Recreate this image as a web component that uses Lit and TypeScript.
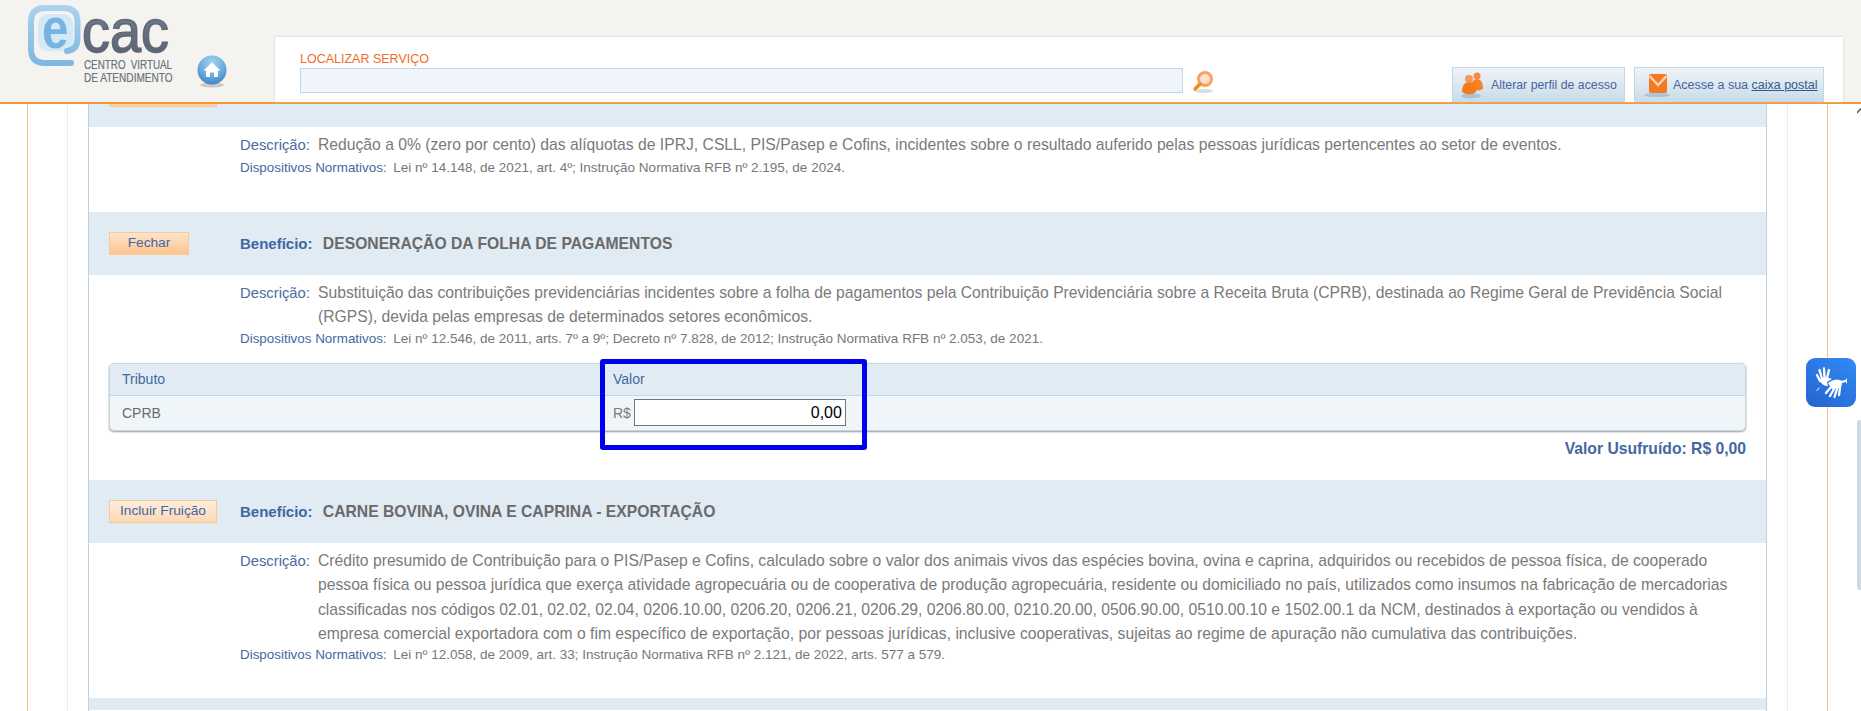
import { LitElement, html, css, svg } from "lit";
import { customElement } from "lit/decorators.js";

const logo = svg`
<svg class="logo" width="152" height="88" viewBox="24 0 152 88">
  <defs>
    <linearGradient id="lg" x1="0" y1="0" x2="0" y2="1"><stop offset="0" stop-color="#a9d2ee"/><stop offset="1" stop-color="#7db7e2"/></linearGradient>
    <linearGradient id="cg" x1="0" y1="0" x2="0" y2="1"><stop offset="0" stop-color="#7d8696"/><stop offset="1" stop-color="#535d6e"/></linearGradient>
  </defs>
  <rect x="38" y="14" width="35" height="37" rx="10" fill="#d5e8f6"/>
  <path d="M71 63 H45 Q31 63 31 49 V22 Q31 8 45 8 H64 Q77.500 8 77.500 22 V38 Q77.500 50 67 51" fill="none" stroke="url(#lg)" stroke-width="6" stroke-linecap="round"/>
  <text transform="translate(42,48) scale(.82,1)" font-family="Liberation Sans, Arial, sans-serif" font-weight="700" font-size="58" fill="#76b3e0">e</text>
  <text transform="translate(82,52) scale(.9,1)" font-family="Liberation Sans, Arial, sans-serif" font-size="62" fill="url(#cg)" stroke="#5f6979" stroke-width="1.600">cac</text>
  <text transform="translate(84,69) scale(.82,1)" word-spacing="3" font-family="Liberation Sans, Arial, sans-serif" font-size="12" fill="#6c7480" stroke="#6c7480" stroke-width=".2">CENTRO VIRTUAL</text>
  <text transform="translate(84,81.500) scale(.84,1)" font-family="Liberation Sans, Arial, sans-serif" font-size="12" fill="#6c7480" stroke="#6c7480" stroke-width=".2">DE ATENDIMENTO</text>
</svg>`;

const home = svg`
<svg class="home" width="32" height="34" viewBox="0 0 32 34">
  <defs>
    <radialGradient id="hg" cx=".5" cy=".25" r=".8"><stop offset="0" stop-color="#a4d2f0"/><stop offset=".6" stop-color="#66a8dc"/><stop offset="1" stop-color="#3c7fbc"/></radialGradient>
  </defs>
  <ellipse cx="16" cy="30" rx="12" ry="2.500" fill="#c9c9c5"/>
  <circle cx="16" cy="15" r="14.500" fill="url(#hg)"/>
  <path d="M16 7.500 L24.500 15.500 H22 V22 H18 V17.500 H14 V22 H10 V15.500 H7.500 Z" fill="#fff"/>
</svg>`;

const lens = svg`
<svg width="22" height="24" viewBox="0 0 22 24">
  <ellipse cx="12" cy="21" rx="9" ry="2" fill="#dcdcdc"/>
  <circle cx="13" cy="9" r="6.500" fill="#fde0cf" stroke="#f9a264" stroke-width="3"/>
  <path d="M8 14 L3 19" stroke="#f28a1c" stroke-width="3.500" stroke-linecap="round"/>
</svg>`;

const people = svg`
<svg width="26" height="30" viewBox="0 0 26 30">
  <ellipse cx="10" cy="26" rx="10" ry="2.500" fill="#a9c3dc"/>
  <circle cx="16" cy="6" r="3.500" fill="#f68a3a"/>
  <path d="M10 19 Q10 9 16 9 Q22 9 22 19 Q16 22 10 19Z" fill="#f5832a"/>
  <circle cx="8" cy="9" r="4" fill="#f79a58"/>
  <path d="M1 22 Q1 12 8 12 Q15 12 15 22 Q8 27 1 22Z" fill="#f47b1c"/>
</svg>`;

const mail = svg`
<svg width="28" height="28" viewBox="0 0 28 28">
  <ellipse cx="13" cy="24" rx="13" ry="2" fill="#a9c3dc"/>
  <rect x="5" y="3" width="18" height="19" rx="2" fill="#f47a22"/>
  <path d="M5.500 5 L14 14 L22.500 5" fill="none" stroke="#fbd3b4" stroke-width="2.500"/>
</svg>`;

const hands = svg`
<svg width="50" height="49" viewBox="0 0 50 49" fill="none" stroke="#fff" stroke-linecap="round">
  <g stroke-width="2.300">
    <path d="M14 23 L11 17"/><path d="M16 21 L13.500 12"/><path d="M18.500 20 L18 10.500"/><path d="M21 20 L23 12"/>
  </g>
  <path d="M13.500 22 Q16 18.500 22 19.500 L26 21 L21 24 L22 28 Q16 28 13.500 22Z" fill="#fff" stroke="none"/>
  <path d="M22 25 Q29 19 36.500 23 L35 30 L26 31Z" fill="#fff" stroke="none"/>
  <g stroke-width="2.300">
    <path d="M25 29 L20 35"/><path d="M28 31 L24 38"/><path d="M31 31 L28.500 39"/><path d="M34 30 L33 37"/><path d="M36 24 L39 23"/>
  </g>
  <path d="M40.500 21 V25 M13 30 L11 32.500" stroke-width="1"/>
</svg>`;

@customElement("app-root")
export class AppRoot extends LitElement {
  static styles = css`
    :host { display: block; position: relative; height: 711px; overflow: hidden; background: #fff;
      font-family: "Liberation Sans", Arial, sans-serif; color: #6f6f6f; }
    .top { display: flex; align-items: flex-end; height: 102px; background: #f4f3ef; border-bottom: 2px solid #f5973b; box-sizing: content-box; }
    .brand { display: flex; align-self: flex-start; width: 275px; height: 102px; padding-left: 24px; box-sizing: border-box; }
    .logo { flex: none; }
    .home { flex: none; margin: 55px 0 0 20px; }
    .panel { display: flex; width: 1568px; height: 65px; background: #fff; box-shadow: 0 0 2px #c9c9c4; box-sizing: border-box; padding-left: 25px; }
    .search { width: 883px; flex: none; padding-top: 13px; }
    .search label { display: block; height: 18px; line-height: 18px; font-size: 12.500px; color: #f26a2a; }
    .search input { display: block; width: 100%; height: 25px; box-sizing: border-box; border: 1px solid #bfd6e8; background: #eff5fa; padding: 0; }
    .lens { flex: none; margin: 33px 0 0 9px; height: 24px; }
    .actions { display: flex; gap: 9px; margin-left: 238px; align-self: flex-end; }
    .act { display: flex; align-items: center; height: 35px; box-sizing: border-box; border: 1px solid #c0d8e8; border-bottom: 0;
      background: linear-gradient(#f0f4f8, #c8dbe8); font-size: 12.500px; color: #46659f; white-space: nowrap; }
    .act.a { width: 173px; padding-left: 8px; font-size: 12.300px; }
    .act.a span { margin-left: 4px; }
    .act.b { width: 190px; padding-left: 9px; }
    .act.b span { margin-left: 1px; }
    .act u { color: #34598f; }

    .page { margin: 0 33px 0 27px; border-left: 1px solid #f8c088; border-right: 1px solid #f8c088; height: 607px; overflow: hidden; }
    .col { margin: 0 39px; border-left: 1px solid #ececec; border-right: 1px solid #ececec; padding: 0 20px; height: 100%; }
    .main { border-left: 1px solid #b8d2e8; border-right: 1px solid #b8d2e8; height: 100%; }

    .bar { background: #e0ebf4; display: flex; align-items: center; height: 63px; }
    .bar.cut { height: 23px; align-items: flex-start; }
    .bar.next { height: 12px; }
    .stub { margin-left: 20px; width: 108px; height: 3px; box-sizing: border-box; background: #fcd3a8; border: 1px solid #f9c88f; border-top: 0; }
    .slot { width: 151px; flex: none; padding-left: 20px; box-sizing: border-box; }
    .btn { display: flex; justify-content: center; align-items: center; height: 23px; box-sizing: border-box; border: 1px solid #fbc890;
      font-size: 13.700px; color: #46659f; white-space: nowrap; background: linear-gradient(#fde5cd, #fcc48e); padding-bottom: 2px; }
    .btn.wide { width: 108px; background: linear-gradient(#fdeedd, #fcd8b4); }
    .btn.short { width: 80px; }
    .title { font-size: 15.700px; font-weight: 700; color: #6a6a6a; }
    .title b { color: #3f67a3; margin-right: 6px; font-size: 15px; }

    .body { padding: 5.500px 17px 0 151px; }
    .desc { display: flex; font-size: 15.700px; line-height: 24.500px; color: #7a7a7a; }
    .desc b { font-weight: 400; color: #4a6ba3; flex: none; width: 78px; font-size: 14.800px; }
    .norm { font-size: 13.500px; line-height: 16px; color: #777; margin-top: 1px; }
    .norm b { font-weight: 400; color: #44689f; margin-right: 3px; font-size: 13.400px; }
    .s1 { height: 85px; }
    .s1 .norm { margin-top: 3px; }
    .s3 .norm { margin-top: 0; }
    .s2 { height: 205px; }
    .s3 { height: 155px; }

    .tw { position: relative; margin: 16px 0 0 20px; width: 1637px; }
    .table { border: 1px solid #c6d7e4; border-radius: 5px; overflow: hidden; box-shadow: 0 1px 2px #999; background: #f0f5f9; }
    .tr { display: grid; grid-template-columns: 491px 1fr; }
    .tr > div { padding-left: 12px; display: flex; align-items: center; }
    .th { height: 32px; box-sizing: border-box; background: #e0ebf4; border-bottom: 1px solid #c3d4e2; color: #44689f; font-size: 14px; }
    .td { height: 34px; color: #6a6a6a; font-size: 14px; }
    .rs { color: #7a7a7a; margin-right: 3px; font-size: 14px; }
    .val { width: 212px; height: 27px; box-sizing: border-box; border: 1px solid #767676; background: #fff; text-align: right; font: 16px "Liberation Sans", Arial, sans-serif; color: #000; padding: 0 3px 0 0; outline: 0; }
    .mark { position: absolute; left: 491px; top: -4px; width: 267px; height: 91px; box-sizing: border-box; border: 5px solid #0000ee; border-radius: 3px; pointer-events: none; }
    .sum { text-align: right; margin: 8px 0 0 20px; width: 1637px; line-height: 20px; font-size: 15.700px; font-weight: 700; color: #44689f; }

    .hand { position: absolute; left: 1806px; top: 358px; width: 50px; height: 49px; border-radius: 9px; background: linear-gradient(35deg, #2563cf, #318bf5); display: flex; }
    .thumb { position: absolute; left: 1857px; top: 420px; width: 4px; height: 170px; background: #cfd9e2; border-radius: 3px 0 0 3px; }
    .arrow { position: absolute; left: 1857px; top: 108px; width: 4px; height: 6px; }
  `;

  render() {
    return html`
      <div class="top">
        <div class="brand">${logo}${home}</div>
        <div class="panel">
          <div class="search"><label>LOCALIZAR SERVIÇO</label><input type="text" /></div>
          <div class="lens">${lens}</div>
          <div class="actions">
            <div class="act a">${people}<span>Alterar perfil de acesso</span></div>
            <div class="act b">${mail}<span>Acesse a sua <u>caixa postal</u></span></div>
          </div>
        </div>
      </div>
      <div class="page"><div class="col"><div class="main">
        <div class="bar cut"><div class="stub"></div></div>
        <section class="s1"><div class="body">
          <div class="desc"><b>Descrição:</b><span>Redução a 0% (zero por cento) das alíquotas de IPRJ, CSLL, PIS/Pasep e Cofins, incidentes sobre o resultado auferido pelas pessoas jurídicas pertencentes ao setor de eventos.</span></div>
          <div class="norm"><b>Dispositivos Normativos:</b> Lei nº 14.148, de 2021, art. 4º; Instrução Normativa RFB nº 2.195, de 2024.</div>
        </div></section>

        <div class="bar">
          <div class="slot"><div class="btn short">Fechar</div></div>
          <div class="title"><b>Benefício:</b> DESONERAÇÃO DA FOLHA DE PAGAMENTOS</div>
        </div>
        <section class="s2">
          <div class="body">
            <div class="desc"><b>Descrição:</b><span>Substituição das contribuições previdenciárias incidentes sobre a folha de pagamentos pela Contribuição Previdenciária sobre a Receita Bruta (CPRB), destinada ao Regime Geral de Previdência Social (RGPS), devida pelas empresas de determinados setores econômicos.</span></div>
            <div class="norm"><b>Dispositivos Normativos:</b> Lei nº 12.546, de 2011, arts. 7º a 9º; Decreto nº 7.828, de 2012; Instrução Normativa RFB nº 2.053, de 2021.</div>
          </div>
          <div class="tw">
            <div class="table">
              <div class="tr th"><div>Tributo</div><div>Valor</div></div>
              <div class="tr td"><div>CPRB</div><div><span class="rs">R$</span><input class="val" .value=${"0,00"} /></div></div>
            </div>
            <div class="mark"></div>
          </div>
          <div class="sum">Valor Usufruído: R$ 0,00</div>
        </section>

        <div class="bar">
          <div class="slot"><div class="btn wide">Incluir Fruição</div></div>
          <div class="title"><b>Benefício:</b> CARNE BOVINA, OVINA E CAPRINA - EXPORTAÇÃO</div>
        </div>
        <section class="s3"><div class="body">
          <div class="desc"><b>Descrição:</b><span>Crédito presumido de Contribuição para o PIS/Pasep e Cofins, calculado sobre o valor dos animais vivos das espécies bovina, ovina e caprina, adquiridos ou recebidos de pessoa física, de cooperado pessoa física ou pessoa jurídica que exerça atividade agropecuária ou de cooperativa de produção agropecuária, residente ou domiciliado no país, utilizados como insumos na fabricação de mercadorias classificadas nos códigos 02.01, 02.02, 02.04, 0206.10.00, 0206.20, 0206.21, 0206.29, 0206.80.00, 0210.20.00, 0506.90.00, 0510.00.10 e 1502.00.1 da NCM, destinados à exportação ou vendidos à empresa comercial exportadora com o fim específico de exportação, por pessoas jurídicas, inclusive cooperativas, sujeitas ao regime de apuração não cumulativa das contribuições.</span></div>
          <div class="norm"><b>Dispositivos Normativos:</b> Lei nº 12.058, de 2009, art. 33; Instrução Normativa RFB nº 2.121, de 2022, arts. 577 a 579.</div>
        </div></section>
        <div class="bar next"></div>
      </div></div></div>
      <div class="hand">${hands}</div>
      <div class="thumb"></div>
      <svg class="arrow" viewBox="0 0 4 6"><path d="M0 5 L3.500 1 L4 1" stroke="#555" stroke-width="1.500" fill="none"/></svg>
    `;
  }
}
